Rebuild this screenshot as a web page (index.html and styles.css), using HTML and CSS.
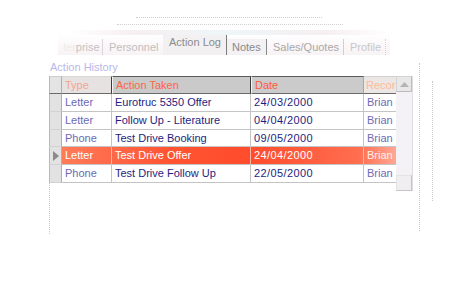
FILE: index.html
```html
<!DOCTYPE html>
<html>
<head>
<meta charset="utf-8">
<link rel="stylesheet" href="styles.css">
</head>
<body>
<div class="screen">
  <div class="fade">
    <div class="fade-line l1"></div>
    <div class="fade-line l2"></div>
    <div class="fade-band"></div>
  </div>
  <div class="tabs">
    <div class="tab t1"><span class="ghost">ter</span>prise</div>
    <div class="tab t2">Personnel</div>
    <div class="tab t3 active">Action Log</div>
    <div class="tab t4">Notes</div>
    <div class="tab t5">Sales/Quotes</div>
    <div class="tab t6">Profile</div>
  </div>
  <div class="caption">Action History</div>
  <div class="grid-area">
    <div class="grid">
      <div class="row head">
        <div class="cell ind"></div>
        <div class="cell c-type">Type</div>
        <div class="cell c-action">Action Taken</div>
        <div class="cell c-date">Date</div>
        <div class="cell c-rec">Recor</div>
      </div>
      <div class="row">
        <div class="cell ind"></div>
        <div class="cell c-type">Letter</div>
        <div class="cell c-action">Eurotruc 5350 Offer</div>
        <div class="cell c-date">24/03/2000</div>
        <div class="cell c-rec">Brian</div>
      </div>
      <div class="row">
        <div class="cell ind"></div>
        <div class="cell c-type">Letter</div>
        <div class="cell c-action">Follow Up - Literature</div>
        <div class="cell c-date">04/04/2000</div>
        <div class="cell c-rec">Brian</div>
      </div>
      <div class="row">
        <div class="cell ind"></div>
        <div class="cell c-type">Phone</div>
        <div class="cell c-action">Test Drive Booking</div>
        <div class="cell c-date">09/05/2000</div>
        <div class="cell c-rec">Brian</div>
      </div>
      <div class="row selected">
        <div class="cell ind"><svg width="6" height="10" viewBox="0 0 6 10"><polygon points="0,0 6,5 0,10" fill="#8a8a8a"/></svg></div>
        <div class="cell c-type">Letter</div>
        <div class="cell c-action">Test Drive Offer</div>
        <div class="cell c-date">24/04/2000</div>
        <div class="cell c-rec">Brian</div>
      </div>
      <div class="row">
        <div class="cell ind"></div>
        <div class="cell c-type">Phone</div>
        <div class="cell c-action">Test Drive Follow Up</div>
        <div class="cell c-date">22/05/2000</div>
        <div class="cell c-rec">Brian</div>
      </div>
      <div class="grid-below"></div>
    </div>
    <div class="scrollbar">
      <div class="sb-btn"><svg width="9" height="5" viewBox="0 0 9 5"><polygon points="0,5 4.5,0 9,5" fill="#b4b4b4"/></svg></div>
      <div class="sb-track"></div>
      <div class="sb-btn bottom"></div>
    </div>
    <div class="edge e1"></div>
    <div class="edge e2"></div>
  </div>
</div>
</body>
</html>
```

FILE: styles.css
```css
html, body {
  margin: 0;
  padding: 0;
  background: #ffffff;
}
body {
  font-family: "Liberation Sans", Arial, sans-serif;
  font-size: 11px;
  width: 467px;
  height: 300px;
  overflow: hidden;
}
.screen {
  display: flex;
  flex-direction: column;
}
.fade {
  height: 35px;
  display: flex;
  flex-direction: column;
}
.fade-line {
  height: 0;
  border-top: 1px dotted #cfcfcf;
}
.fade-line.l1 {
  margin: 17px 0 0 136px;
  width: 186px;
}
.fade-line.l2 {
  margin: 6px 0 0 117px;
  width: 226px;
}
.fade-band {
  margin: 5px 0 0 70px;
  width: 320px;
  height: 5px;
  background: linear-gradient(90deg, #ffffff, #f6eef2 20%, #eef6f7 50%, #f6eef2 80%, #ffffff);
}
.tabs {
  display: flex;
  align-items: flex-end;
  height: 20px;
  margin-left: 58px;
  background: linear-gradient(180deg, #ffffff 0%, #fbf6f8 60%, #f7f4f6 100%);
  width: 332px;
}
.tab {
  height: 16px;
  line-height: 16px;
  color: #c4c4c4;
  box-sizing: border-box;
  white-space: nowrap;
  overflow: hidden;
}
.ghost { color: #ececec; }
.t1 { width: 45px; padding-left: 5px; border-right: 1px solid #d6d6d6; }
.t2 { width: 60px; padding-left: 6px; color: #c0c0c0; }
.t3 { width: 64px; padding-left: 6px; }
.t4 { width: 40px; padding-left: 5px; color: #8a8a8a; border-right: 1px solid #8a8a8a; background: #f3f1f3; }
.t5 { width: 77px; padding-left: 6px; color: #a8a8a8; border-right: 1px solid #d0d0d0; }
.t6 { width: 42px; padding-left: 6px; color: #c8c8c8; border-right: 1px dotted #d4d4d4; }
.tab.active {
  height: 20px;
  line-height: 15px;
  color: #8c8c8c;
  background: #f2f0f1;
  border-right: 1px solid #7c7c7c;
}
.caption {
  margin: 6px 0 0 50px;
  height: 15px;
  line-height: 12px;
  color: #b8b8e8;
}
.grid-area {
  display: flex;
  align-items: flex-start;
  margin-left: 49px;
}
.grid {
  width: 347px;
  display: flex;
  flex-direction: column;
}
.row {
  display: grid;
  grid-template-columns: 13px 50px 139px 113px 32px;
  height: 18px;
}
.row:nth-child(even) { height: 17.5px; }
.cell {
  box-sizing: border-box;
  border-right: 1px solid #c4c4c4;
  border-bottom: 1px solid #c4c4c4;
  line-height: 17px;
  padding-left: 3px;
  white-space: nowrap;
  overflow: hidden;
  font-size: 11px;
}
.cell.ind {
  padding: 0;
  background: #e2e2e2;
  border-left: 1px solid #b8b8b8;
  border-right: 1px solid #b0b0b0;
  border-bottom: 1px solid #d2d2d2;
  display: flex;
  align-items: center;
  justify-content: center;
}
.c-type { color: #6a6ab6; }
.c-action { color: #1e1e80; }
.c-date { color: #1e1e80; letter-spacing: 0.4px; }
.c-rec { color: #6c6cb8; border-right: none; }

.row.head .cell {
  border-top: 1px solid #5a5a5a;
  border-bottom: 1px solid #6a6a6a;
  line-height: 16px;
  font-size: 11px;
}
.row.head .ind { background: #e4e4e4; border-top-color: #cfcfcf; }
.row.head .c-type { background: #e6e2e2; color: #f6a48e; border-top-color: #d6d6d6; border-right-color: #3c3c3c; }
.row.head .c-action { background: #cacaca; color: #ff6444; border-left: 1px solid #f4f4f4; border-right-color: #3c3c3c; }
.row.head .c-date { background: #cbcbcb; color: #ff5a3c; letter-spacing: 0; border-left: 1px solid #f4f4f4; border-right-color: #a8a8a8; }
.row.head .c-rec { background: #ece6e4; color: #ffba98; border-top-color: #d0d0d0; padding-left: 2px; }

.row.selected {
  background: linear-gradient(90deg, #ff805c 0px, #ff6a4a 60px, #ff5432 120px, #ff4c2c 200px, #ff6e50 310px, #ffa794 347px);
}
.row.selected .cell { color: #ffffff; border-right-color: #ffb4a0; }
.row.selected .ind { background: #e2e2e2; border-right-color: #b0b0b0; }
.row.selected .c-rec { color: #fff0ea; }

.grid-below {
  height: 51px;
  border-left: 1px dotted #c8c8c8;
  width: 0;
}
.scrollbar {
  width: 16px;
  height: 115px;
  display: flex;
  flex-direction: column;
  background: #f6f0f2;
  border-right: 1px solid #e0dce0;
}
.sb-btn {
  height: 16px;
  box-sizing: border-box;
  background: #e8e8e8;
  border: 1px solid #d4d4d4;
  border-right-color: #bcbcbc;
  border-bottom-color: #bcbcbc;
  display: flex;
  align-items: center;
  justify-content: center;
}
.sb-track {
  flex: 1;
  background: repeating-linear-gradient(45deg, #f8f0f4 0 2px, #eef4f6 2px 4px);
}
.sb-btn.bottom {
  background: #f0eef0;
  border-color: #e4e4e4;
  border-bottom-color: #c4c4c4;
  border-right-color: #c4c4c4;
}
.edge {
  width: 0;
  border-left: 1px dotted #cacaca;
}
.e1 { margin: -13px 0 0 6px; height: 168px; }
.e2 { margin: 5px 0 0 12px; height: 120px; }
```
